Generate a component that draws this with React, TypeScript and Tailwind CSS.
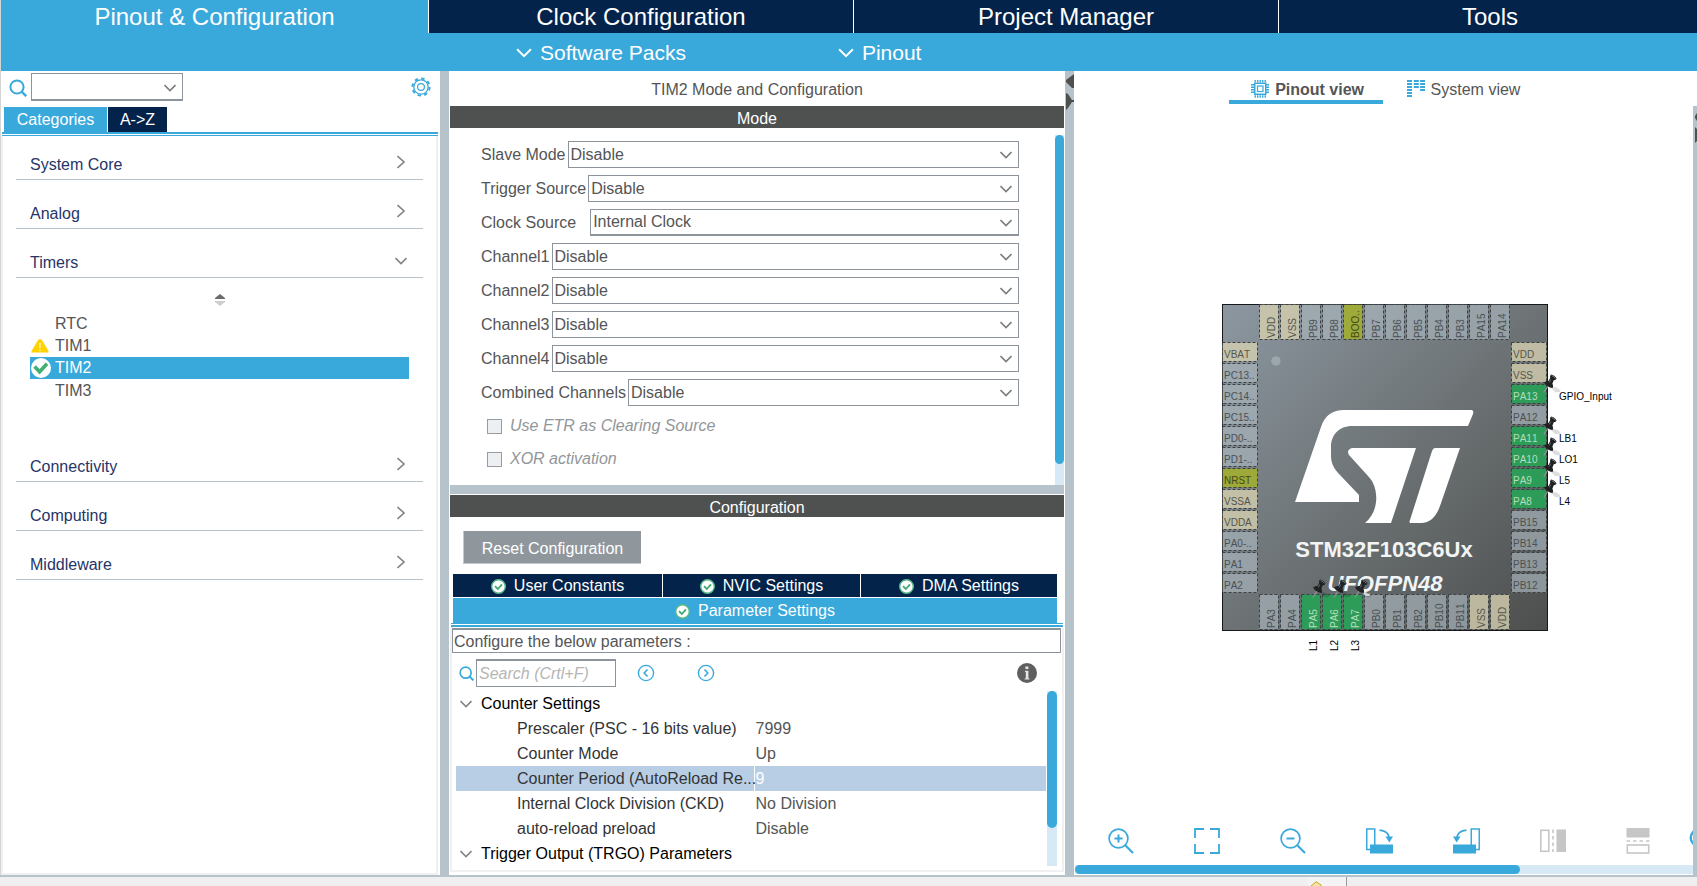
import React from "react";

type SvgProps = { className?: string };

const Chevron = ({ className = "" }: SvgProps) => (
  <svg viewBox="0 0 12 8" width="12" height="8" fill="none" stroke="currentColor" strokeWidth="1.6" className={className} aria-hidden="true">
    <path d="M0.5 1 L6 6.5 L11.5 1" />
  </svg>
);

const ChevronRight = () => (
  <svg viewBox="0 0 8 14" width="8" height="14" fill="none" stroke="#858585" strokeWidth="1.6" aria-hidden="true">
    <path d="M0.5 1 L7 7 L0.5 13" />
  </svg>
);

const Magnifier = ({ size }: { size: number }) => (
  <svg viewBox="0 0 18 18" width={size} height={size} fill="none" stroke="#39a9dc" strokeWidth="2" className="shrink-0" aria-hidden="true">
    <circle cx="8" cy="8" r="6.6" />
    <path d="M12.5 12.5 L17.2 17.2" strokeWidth="2.4" />
  </svg>
);

const Gear = () => (
  <svg viewBox="0 0 20 20" width="20" height="20" fill="none" stroke="#39a9dc" aria-hidden="true">
    <circle cx="10" cy="10" r="7.2" strokeWidth="1.3" />
    <circle cx="10" cy="10" r="8.6" strokeWidth="2" strokeDasharray="3.4 3.35" />
    <circle cx="10" cy="10" r="3.4" strokeWidth="1.2" />
  </svg>
);

const CheckBadge = () => (
  <svg viewBox="0 0 15 15" width="15" height="15" className="shrink-0" aria-hidden="true">
    <circle cx="7.5" cy="7.5" r="6.8" fill="#fff" stroke="#56b98a" strokeWidth="1.4" />
    <path d="M4 7.2 L6.8 10 L11 5.4" fill="none" stroke="#41a96f" strokeWidth="1.8" />
  </svg>
);

const SelectedCheck = () => (
  <svg viewBox="0 0 20 20" width="20" height="20" aria-hidden="true">
    <circle cx="10" cy="10" r="10" fill="#fff" />
    <path d="M3.6 8.6 L8.6 13.8 L16 5.8" fill="none" stroke="#41b072" strokeWidth="3.6" />
  </svg>
);

const Warning = () => (
  <svg viewBox="0 0 18 14" width="18" height="14" aria-hidden="true">
    <path d="M9 0 Q10.5 0 11.5 2 L17.5 12 V13.5 H0.5 V12 L6.5 2 Q7.5 0 9 0Z" fill="#ffd200" />
    <path d="M9 4 V9 M9 10.5 V12" stroke="#fff6c0" strokeWidth="1.4" />
  </svg>
);

const StepCircle = ({ dir }: { dir: "left" | "right" }) => (
  <svg viewBox="0 0 18 18" width="18" height="18" fill="none" stroke="#39a9dc" aria-hidden="true">
    <circle cx="9" cy="9" r="7.6" strokeWidth="1.4" />
    <path d={dir === "left" ? "M10.5 5.5 L7.2 9 L10.5 12.5" : "M7.5 5.5 L10.8 9 L7.5 12.5"} strokeWidth="1.6" />
  </svg>
);

const Info = () => (
  <svg viewBox="0 0 20 20" width="20" height="20" aria-hidden="true">
    <circle cx="10" cy="10" r="10" fill="#5f5f5f" />
    <path d="M8.4 3.6 H11.4 V6 H8.4Z M8 7.8 H11.4 V15.4 H12.4 V16.4 H7.6 V15.4 H8.8 V9 H8Z" fill="#e6e6e6" />
  </svg>
);

const ChipIcon = () => (
  <svg viewBox="0 0 18 18" width="18" height="18" fill="none" stroke="#39a9dc" aria-hidden="true">
    <rect x="3.75" y="3.25" width="11" height="11" strokeWidth="1.5" />
    <rect x="6.5" y="6" width="5.5" height="5.5" strokeWidth="1.2" />
    <path d="M3.5 1 H15 M3.5 16.5 H15" strokeWidth="2.4" strokeDasharray="1.4 1.1" />
    <path d="M1.5 4 V14 M16.5 4 V14" strokeWidth="3" strokeDasharray="1.4 1.1" />
  </svg>
);

const SystemIcon = () => (
  <svg viewBox="0 0 18 17" width="18" height="17" fill="none" stroke="#39a9dc" strokeWidth="5" strokeDasharray="2 1" aria-hidden="true">
    <path d="M2.5 0 V17" />
    <path d="M9.3 0 V9" />
    <path d="M15.6 0 V12" />
  </svg>
);

const ZoomGlyph = ({ plus }: { plus: boolean }) => (
  <svg viewBox="0 0 26 26" width="26" height="26" fill="none" stroke="#39a9dc" aria-hidden="true">
    <circle cx="10.5" cy="10.5" r="9.4" strokeWidth="1.7" />
    <path d="M17 17 L25 25" strokeWidth="2.2" />
    <path d={plus ? "M6.5 10.5 H14.5 M10.5 6.5 V14.5" : "M6.5 10.5 H14.5"} strokeWidth="2" />
  </svg>
);

const FitGlyph = () => (
  <svg viewBox="0 0 26 26" width="26" height="26" fill="none" stroke="#39a9dc" strokeWidth="1.8" aria-hidden="true">
    <path d="M1 10 V1 H10 M16 1 H25 V10 M25 16 V25 H16 M10 25 H1 V16" />
  </svg>
);

const RotateGlyph = ({ flip }: { flip: boolean }) => (
  <svg viewBox="0 0 27 26" width="27" height="26" fill="none" stroke="#39a9dc" className={flip ? "-scale-x-100" : ""} aria-hidden="true">
    <rect x="0.75" y="1" width="8" height="20.5" strokeWidth="1.5" />
    <path d="M4 16.5 H27 V25.5 H4Z" fill="#39a9dc" stroke="none" />
    <path d="M13.5 2.2 C19 2.6 22.6 5.5 23.4 10" strokeWidth="1.8" />
    <path d="M19.4 8.6 L27 8.6 L23.4 14.6Z" fill="#39a9dc" stroke="none" />
  </svg>
);

const FlipGlyph = ({ vertical }: { vertical: boolean }) =>
  vertical ? (
    <svg viewBox="0 0 24 26" width="24" height="26" fill="none" stroke="#c6c6c6" strokeWidth="1.6" aria-hidden="true">
      <rect x="0.5" y="0" width="23" height="9.5" fill="#c6c6c6" stroke="none" />
      <path d="M0.5 13 H23.5" strokeDasharray="3.5 3" />
      <rect x="1.3" y="17" width="21.4" height="8" />
    </svg>
  ) : (
    <svg viewBox="0 0 26 24" width="26" height="24" fill="none" stroke="#c6c6c6" strokeWidth="1.6" aria-hidden="true">
      <rect x="0.8" y="1.3" width="8" height="21" />
      <path d="M13 0.5 V23" strokeDasharray="3.5 3" />
      <rect x="16.5" y="0.5" width="9.5" height="22.5" fill="#c6c6c6" stroke="none" />
    </svg>
  );

const PushPin = ({ x, y }: { x: number; y: number }) => (
  <g transform={`translate(${x} ${y})`}>
    <path d="M7 13 Q13 12 17 16 Q19 19 12 18Z" fill="#000" opacity="0.13" />
    <path d="M5 12 L0.8 18.5" stroke="#8d9296" strokeWidth="1.3" />
    <path d="M1 8.5 Q3 6.5 5.5 7 L7.2 4 Q6.6 1.8 8 0.6 Q11.5 1 13.6 4.6 Q13 6.2 10.8 6.2 L9.4 9.4 Q10.8 12 9.6 14 Q4 13.4 1 8.5Z" fill="#1f2122" />
    <path d="M8.6 1.6 Q11 2.2 12.4 4.4" stroke="#777c7f" strokeWidth="1" fill="none" />
    <path d="M7.6 5.6 L6.4 8.4" stroke="#6b6f72" strokeWidth="1" />
  </g>
);

type PinKind = "io" | "power" | "reset" | "used";
const kindOf = (name: string, used: string[]): PinKind =>
  used.includes(name) ? "used" : name.startsWith("V") ? "power" : name === "NRST" || name.startsWith("BOO") ? "reset" : "io";

const fills: Record<PinKind, { fill: string; opacity: number; text: string }> = {
  io: { fill: "#a9b5bd", opacity: 0.68, text: "#4b5154" },
  power: { fill: "#d6d0b0", opacity: 0.8, text: "#55564c" },
  reset: { fill: "#a3b02a", opacity: 0.85, text: "#454b1c" },
  used: { fill: "#2a9f57", opacity: 0.95, text: "#b5dcbd" },
};

const leftPins = ["VBAT", "PC13..", "PC14..", "PC15..", "PD0-..", "PD1-..", "NRST", "VSSA", "VDDA", "PA0-..", "PA1", "PA2"];
const rightPins = ["VDD", "VSS", "PA13", "PA12", "PA11", "PA10", "PA9", "PA8", "PB15", "PB14", "PB13", "PB12"];
const topPins = ["VDD", "VSS", "PB9", "PB8", "BOO..", "PB7", "PB6", "PB5", "PB4", "PB3", "PA15", "PA14"];
const bottomPins = ["PA3", "PA4", "PA5", "PA6", "PA7", "PB0", "PB1", "PB2", "PB10", "PB11", "VSS", "VDD"];
const labels: Record<string, string> = { PA13: "GPIO_Input", PA11: "LB1", PA10: "LO1", PA9: "L5", PA8: "L4", PA5: "L1", PA6: "L2", PA7: "L3" };
const usedPins = Object.keys(labels);

const Pin = ({ name, x, y, vertical }: { name: string; x: number; y: number; vertical?: boolean }) => {
  const k = fills[kindOf(name, usedPins)];
  const w = vertical ? 19 : 35;
  const h = vertical ? 35 : 19;
  return (
    <g>
      <rect x={x + 0.5} y={y + 0.5} width={w} height={h} fill={k.fill} fillOpacity={k.opacity} stroke="#3c4144" strokeDasharray="3 2" />
      {vertical ? (
        <text transform={`translate(${x + 16} ${y + 34}) rotate(-90)`} fill={k.text}>{name}</text>
      ) : (
        <text x={x + 2} y={y + 16} fill={k.text}>{name}</text>
      )}
    </g>
  );
};

const Chip = () => (
  <svg viewBox="0 0 326 327" width="326" height="327" overflow="visible" fontFamily="Liberation Sans, Arial, sans-serif" fontSize="10" className="[font-kerning:none]" role="img" aria-label="STM32F103C6Ux UFQFPN48">
    <defs>
      <linearGradient id="body" x1="0" y1="0" x2="1" y2="1">
        <stop offset="0" stopColor="#8c97a1" />
        <stop offset="0.5" stopColor="#6d7375" />
        <stop offset="1" stopColor="#4d4f4e" />
      </linearGradient>
    </defs>
    <rect x="0.5" y="0.5" width="325" height="326" fill="url(#body)" stroke="#16181a" />
    {leftPins.map((n, i) => <Pin key={n} name={n} x={0} y={38 + i * 21} />)}
    {rightPins.map((n, i) => <Pin key={n} name={n} x={289} y={38 + i * 21} />)}
    {topPins.map((n, i) => <Pin key={n} name={n} x={37 + i * 21} y={0} vertical />)}
    {bottomPins.map((n, i) => <Pin key={n} name={n} x={37 + i * 21} y={290} vertical />)}
    <circle cx="54" cy="57" r="5" fill="#9ba6ad" stroke="#828b90" strokeDasharray="2 2" />
    <g fill="#fff">
      <path d="M122 106 H250 Q252 107 251 110 L246 122 H130 C117 122 109 131 109 143 V152 C109 160 113 166 118 171 L137 191 V198 H73 L99 123 C103 111 111 106 122 106Z" />
      <path d="M130 144 H194 L169 219 H143 C155 209 157 192 151 179 C150 177 148 174 146 172 L127 151 Q124 146 130 144Z" />
      <path d="M213 144 H238 L218 202 C214 213 208 219 199 219 H188 Q187 218 188 216 L210 147 Q211 144 213 144Z" />
    </g>
    <g fill="#f2f4f5" fontSize="22" fontWeight="700" textAnchor="middle">
      <text x="162" y="253">STM32F103C6Ux</text>
      <text x="163" y="287" fontStyle="italic">UFQFPN48</text>
    </g>
    {rightPins.map((n, i) =>
      labels[n] ? (
        <g key={n}>
          <PushPin x={321} y={28 + i * 21} />
          <text x="337" y={54 + i * 21} fill="#000">{labels[n]}</text>
        </g>
      ) : null
    )}
    {bottomPins.map((n, i) =>
      labels[n] ? (
        <g key={n}>
          <PushPin x={48 + i * 21} y={275} />
          <text transform={`translate(${53 + i * 21} 347) rotate(-90)`} fill="#000">{labels[n]}</text>
        </g>
      ) : null
    )}
  </svg>
);

const Category = ({ name, open }: { name: string; open?: boolean }) => (
  <button className="flex h-[49px] w-full items-end justify-between border-b border-[#b7c3ca] pr-4 pb-1 pl-[14px] text-left text-[#263468]">
    <span className="leading-5">{name}</span>
    <span className="flex h-5 w-3 justify-center pb-1">{open ? <Chevron className="mt-1 text-[#858585]" /> : <ChevronRight />}</span>
  </button>
);

const modes = [
  { label: "Slave Mode", value: "Disable" },
  { label: "Trigger Source", value: "Disable" },
  { label: "Clock Source", value: "Internal Clock", wide: true },
  { label: "Channel1", value: "Disable" },
  { label: "Channel2", value: "Disable" },
  { label: "Channel3", value: "Disable" },
  { label: "Channel4", value: "Disable" },
  { label: "Combined Channels", value: "Disable" },
];

const ModeRow = ({ label, value, wide }: { label: string; value: string; wide?: boolean }) => {
  const id = label.replace(" ", "-").toLowerCase();
  return (
    <div className={wide ? "flex items-center gap-[14px]" : "flex items-center gap-[2px]"}>
      <label htmlFor={id} className="whitespace-nowrap">{label}</label>
      <div className="relative h-[27px] flex-1">
        <select id={id} className={wide ? "h-full w-full appearance-none border border-b-2 border-[#8d949b] bg-white px-[2px] outline-none" : "h-full w-full appearance-none border border-[#8d949b] bg-white px-[2px] outline-none"}>
          <option>{value}</option>
        </select>
        <Chevron className="pointer-events-none absolute top-[10px] right-[7px] text-[#7d7d7d]" />
      </div>
    </div>
  );
};

const checkBox = "size-[15px] appearance-none border border-[#969ca1] bg-[#edf0f2]";

const CheckRow = ({ label }: { label: string }) => (
  <label className="flex h-[26px] items-center gap-2 text-[#929699] italic">
    <input type="checkbox" disabled className={checkBox} />
    {label}
  </label>
);

const params = [
  ["Prescaler (PSC - 16 bits value)", "7999"],
  ["Counter Mode", "Up"],
  ["Counter Period (AutoReload Re...", "9"],
  ["Internal Clock Division (CKD)", "No Division"],
  ["auto-reload preload", "Disable"],
];

const GroupRow = ({ name }: { name: string }) => (
  <tr className="h-[25px]">
    <th colSpan={2} scope="colgroup" className="p-0 text-left font-normal text-black">
      <span className="flex items-center gap-[9px] pl-1">
        <Chevron className="text-[#858585]" />
        {name}
      </span>
    </th>
  </tr>
);

const SettingsTab = ({ name, className }: { name: string; className: string }) => (
  <button role="tab" className={`flex items-center justify-center gap-2 pt-px text-white ${className}`}>
    <CheckBadge />
    {name}
  </button>
);

const SectionBar = ({ children }: { children: React.ReactNode }) => (
  <h2 className="h-[22px] shrink-0 bg-[#4f5150] text-center leading-[25px] text-white">{children}</h2>
);

export default function App() {
  return (
    <div className="flex h-screen flex-col overflow-hidden bg-white font-['Liberation_Sans',Arial,sans-serif] text-[16px] leading-5 text-[#545556]">
      <header className="shrink-0 border-l border-[#d5d5d5] bg-[#39a9dc] text-white">
        <nav className="grid h-[33px] grid-cols-[427fr_425fr_425fr_419fr] text-[24px] leading-[33px]">
          <button className="bg-[#39a9dc]">Pinout &amp; Configuration</button>
          <button className="border-l border-white bg-[#03234b]">Clock Configuration</button>
          <button className="border-l border-white bg-[#03234b]">Project Manager</button>
          <button className="border-l border-white bg-[#03234b] pl-1">Tools</button>
        </nav>
        <div className="flex h-[38px] gap-[152px] pt-[2px] pl-[515px] text-[21px] leading-[38px]">
          <button className="flex items-center gap-2">
            <Chevron className="h-[10px] w-4" />
            <span>Software Packs</span>
          </button>
          <button className="flex items-center gap-2">
            <Chevron className="h-[10px] w-4" />
            <span>Pinout</span>
          </button>
        </div>
      </header>

      <main className="flex min-h-0 flex-1">
        <aside className="flex w-[440px] shrink-0 flex-col border-l border-[#d5d5d5]">
          <div className="flex h-[36px] shrink-0 items-start pt-[2px] pr-[9px] pl-[8px]">
            <span className="mt-[6px] mr-1">
              <Magnifier size={18} />
            </span>
            <div className="relative h-[28px] w-[152px]">
              <select aria-label="Search peripheral" className="h-full w-full appearance-none border border-b-2 border-[#8d949b] bg-white outline-none" />
              <Chevron className="pointer-events-none absolute top-[11px] right-[7px] text-[#7d7d7d]" />
            </div>
            <button aria-label="Settings" className="mt-1 ml-auto">
              <Gear />
            </button>
          </div>
          <div role="tablist" className="flex h-[25px] shrink-0 gap-px pl-[3px] leading-[25px] text-white">
            <button role="tab" className="w-[103px] bg-[#39a9dc]">Categories</button>
            <button role="tab" className="w-[59px] bg-[#03234b]">A-&gt;Z</button>
          </div>
          <div className="mr-[2px] ml-px h-1 shrink-0 border-t-2 border-b border-[#39a9dc]" />
          <div className="mr-[2px] flex min-h-0 flex-1 flex-col border-x-2 border-b-2 border-[#f0f0f0] px-[13px]">
            <div className="-mt-[5px]">
              <Category name="System Core" />
              <Category name="Analog" />
              <Category name="Timers" open />
            </div>
            <div className="flex h-[155px] flex-col pt-[16px] pr-[14px] pl-[14px]">
              <svg viewBox="0 0 10 12" width="10" height="12" className="shrink-0 self-center" aria-hidden="true">
                <path d="M0 5 V4 Q5 0 5 0 Q5 0 10 4 V5Z" fill="#6b6b6b" />
                <path d="M0 7 V8 L5 12 L10 8 V7Z" fill="#cfcfcf" />
              </svg>
              <ul className="mt-[7px] leading-[22px]">
                <li className="h-[22px] pl-[25px]">RTC</li>
                <li className="flex h-[22px] items-center pl-[1px]">
                  <span className="w-6"><Warning /></span>
                  TIM1
                </li>
                <li className="flex h-[22px] items-center bg-[#39a9dc] pl-[1px] text-white">
                  <span className="w-6"><SelectedCheck /></span>
                  TIM2
                </li>
                <li className="h-[22px] pl-[25px] leading-6">TIM3</li>
              </ul>
            </div>
            <div>
              <Category name="Connectivity" />
              <Category name="Computing" />
              <Category name="Middleware" />
            </div>
          </div>
        </aside>
        <div className="w-[9px] shrink-0 bg-[#b7c3ca]" />

        <section className="flex w-[616px] shrink-0 flex-col px-px">
          <h1 className="h-[35px] shrink-0 pt-[2px] text-center leading-[34px]">TIM2 Mode and Configuration</h1>
          <SectionBar>Mode</SectionBar>
          <div className="flex h-[357px] shrink-0 overflow-hidden pt-[7px]">
            <div className="flex-1 pt-[6px] pr-[36px] pl-[31px]">
              <div className="flex flex-col gap-[7px]">
                {modes.map((m) => <ModeRow key={m.label} {...m} />)}
              </div>
              <div className="mt-[7px] flex flex-col gap-[7px] pl-[6px]">
                <CheckRow label="Use ETR as Clearing Source" />
                <CheckRow label="XOR activation" />
                <div className="flex h-[26px] items-center">
                  <input type="checkbox" disabled aria-label="One Pulse Mode" className={checkBox} />
                </div>
              </div>
            </div>
            <div className="w-[9px] bg-[#d8e9f6]">
              <div className="h-[94%] rounded-full bg-[#39a9dc]" />
            </div>
          </div>
          <div className="mb-px h-[9px] shrink-0 bg-[#b7c3ca]" />
          <SectionBar>Configuration</SectionBar>
          <div className="shrink-0 pt-[14px] pb-[10px] pl-[13px]">
            <button className="h-[33px] w-[178px] border-b border-l border-[#c5c9cc] bg-[#8f979d] pt-[3px] text-white">Reset Configuration</button>
          </div>
          <div role="tablist" className="mr-[7px] ml-[3px] flex shrink-0 flex-wrap gap-px">
            <div className="flex h-[23px] w-full gap-px">
              <SettingsTab name="User Constants" className="w-[209px] bg-[#03234b]" />
              <SettingsTab name="NVIC Settings" className="w-[197px] bg-[#03234b]" />
              <SettingsTab name="DMA Settings" className="flex-1 bg-[#03234b]" />
            </div>
            <SettingsTab name="Parameter Settings" className="h-[25px] w-full bg-[#39a9dc]" />
          </div>
          <div className="mr-px ml-px h-1 shrink-0 border-t border-b-2 border-[#39a9dc]" />
          <div className="mb-[3px] flex min-h-0 flex-1 flex-col border-x-2 border-b-2 border-[#f0f0f0] pt-px">
            <p className="mr-px h-[25px] shrink-0 border border-t-2 border-[#8d949b] pl-px leading-6">Configure the below parameters :</p>
            <div className="flex h-[38px] shrink-0 items-center pt-[2px] pr-[25px] pl-[7px]">
              <Magnifier size={15} />
              <input aria-label="Search parameters" placeholder="Search (Crtl+F)" className="ml-[2px] h-7 w-[140px] border border-t-2 border-[#8d949b] px-[2px] italic outline-none placeholder:text-[#b5b5b5]" />
              <button aria-label="Previous" className="ml-[21px]"><StepCircle dir="left" /></button>
              <button aria-label="Next" className="ml-[42px]"><StepCircle dir="right" /></button>
              <button aria-label="Information" className="ml-auto"><Info /></button>
            </div>
            <div className="flex min-h-0 flex-1 overflow-hidden pr-[5px] pb-1 pl-1">
              <div className="min-w-0 flex-1">
                <table className="w-full table-fixed border-collapse">
                  <colgroup>
                    <col className="w-[298px]" />
                    <col />
                  </colgroup>
                  <tbody>
                    <GroupRow name="Counter Settings" />
                    {params.map(([name, value]) => {
                      const selected = value === "9";
                      return (
                        <tr key={name} className={selected ? "h-[25px] bg-[#b8cee5]" : "h-[25px]"}>
                          <td className="p-0 pl-[61px] whitespace-nowrap text-[#333435]">{name}</td>
                          <td className={selected ? "border-l border-white p-0 pl-px text-white" : "border-l border-white p-0 pl-px"}>{value}</td>
                        </tr>
                      );
                    })}
                    <GroupRow name="Trigger Output (TRGO) Parameters" />
                  </tbody>
                </table>
              </div>
              <div className="ml-px w-[10px] bg-[#d8e9f6]">
                <div className="h-[78%] rounded-full bg-[#39a9dc]" />
              </div>
            </div>
          </div>
        </section>

        <div className="w-[9px] shrink-0 bg-[#b7c3ca] pt-[3px]">
          <svg viewBox="0 0 9 38" width="9" height="38" fill="#4f5150" aria-hidden="true">
            <path d="M9 0 V14 L7 14 L1 8 V6Z" />
            <path d="M1 19 L3 20 L7 26 H9 V28 H7 L3 34 L1 36Z" />
          </svg>
        </div>

        <section className="flex min-w-0 flex-1 flex-col">
          <div role="tablist" className="flex h-[35px] shrink-0 justify-center gap-6 pr-[22px]">
            <button role="tab" className="mt-[9px] mb-[2px] flex w-[154px] items-start justify-center gap-[6px] border-b-4 border-[#39a9dc] pl-1 leading-5 font-bold">
              <ChipIcon />
              Pinout view
            </button>
            <button role="tab" className="mt-[9px] flex items-start gap-[6px] leading-5">
              <SystemIcon />
              System view
            </button>
          </div>
          <div className="flex min-h-0 flex-1">
            <div className="flex min-w-0 flex-1 flex-col">
              <div className="flex min-h-0 flex-1 items-center justify-center pt-px pl-[3px]">
                <Chip />
              </div>
              <div className="flex h-[37px] shrink-0 overflow-hidden pl-[34px]">
                <div className="flex shrink-0 gap-[60px]">
                  <button aria-label="Zoom in" className="flex h-[26px] w-[26px] items-center"><ZoomGlyph plus /></button>
                  <button aria-label="Best fit" className="flex h-[26px] w-[26px] items-center"><FitGlyph /></button>
                  <button aria-label="Zoom out" className="flex h-[26px] w-[26px] items-center"><ZoomGlyph plus={false} /></button>
                  <button aria-label="Rotate clockwise" className="flex h-[26px] w-[27px] items-center"><RotateGlyph flip={false} /></button>
                  <button aria-label="Rotate counter-clockwise" className="flex h-[26px] w-[27px] items-center"><RotateGlyph flip /></button>
                  <button aria-label="Flip horizontally" disabled className="flex h-[26px] w-[26px] items-center"><FlipGlyph vertical={false} /></button>
                  <button aria-label="Flip vertically" disabled className="flex h-[26px] w-[24px] items-center"><FlipGlyph vertical /></button>
                </div>
                <span className="ml-[39px] shrink-0"><Magnifier size={22} /></span>
              </div>
              <div className="mb-px ml-px h-[9px] shrink-0 bg-[#d8e9f6]">
                <div className="h-full w-[72%] rounded-full bg-[#39a9dc]" />
              </div>
            </div>
            <div className="w-1 shrink-0 bg-[#b7c3ca] pt-[7px]">
              <svg viewBox="0 0 4 32" width="4" height="32" fill="#4f5150" aria-hidden="true">
                <path d="M4 0 V8 L2 5 V3Z" />
                <path d="M2 14 L4 16 V28 L2 30Z" />
              </svg>
            </div>
          </div>
        </section>
      </main>

      <footer className="flex h-[11px] shrink-0 border-t-2 border-[#b7c3ca] bg-[#efefef]">
        <div className="ml-[77%] flex h-full w-[40px] border-r border-[#9a9a9a] bg-[#f3f3f3] pt-[4px] pl-[3px]">
          <svg viewBox="0 0 12 5" width="12" height="5" aria-hidden="true">
            <path d="M1 5 L5 2 L6 0.6 L8 2 L11 4 V5" fill="#f9e6a0" stroke="#c9a227" />
          </svg>
        </div>
      </footer>
    </div>
  );
}
